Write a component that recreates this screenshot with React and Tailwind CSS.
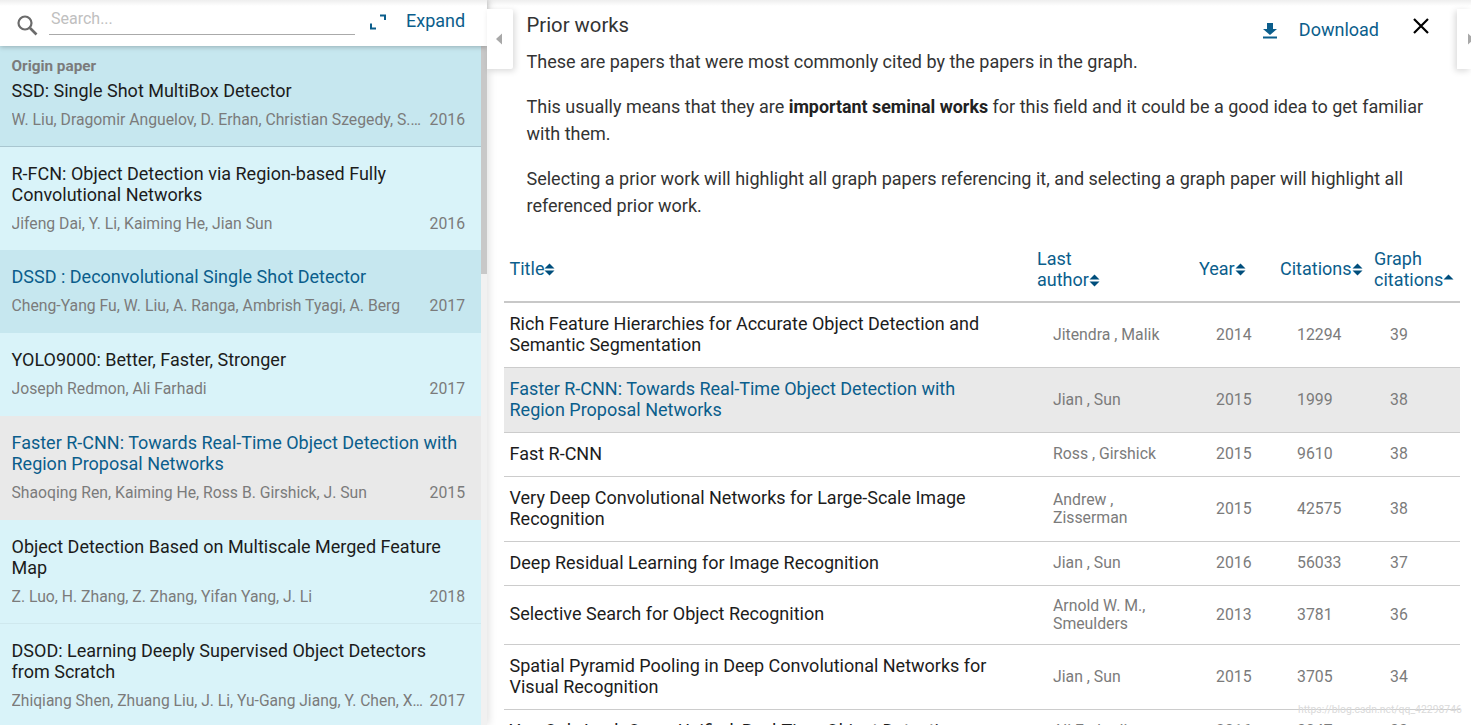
import React from "react";

const font = { fontFamily: "Roboto, sans-serif" };

const cards = [
  { h: "h-[101px]", bg: "bg-[#c6e7ef] border-b border-[#a9c6d0]", origin: true, title: ["SSD: Single Shot MultiBox Detector"], authors: "W. Liu, Dragomir Anguelov, D. Erhan, Christian Szegedy, S. Reed, Cheng-Yang Fu, A. Berg", year: "2016" },
  { h: "h-[103px]", bg: "bg-[#d9f3f9]", title: ["R-FCN: Object Detection via Region-based Fully", "Convolutional Networks"], authors: "Jifeng Dai, Y. Li, Kaiming He, Jian Sun", year: "2016" },
  { h: "h-[83px]", bg: "bg-[#c6e7ef]", link: true, title: ["DSSD : Deconvolutional Single Shot Detector"], authors: "Cheng-Yang Fu, W. Liu, A. Ranga, Ambrish Tyagi, A. Berg", year: "2017" },
  { h: "h-[83px]", bg: "bg-[#d9f3f9]", title: ["YOLO9000: Better, Faster, Stronger"], authors: "Joseph Redmon, Ali Farhadi", year: "2017" },
  { h: "h-[104px]", bg: "bg-[#e9e9e9]", link: true, title: ["Faster R-CNN: Towards Real-Time Object Detection with", "Region Proposal Networks"], authors: "Shaoqing Ren, Kaiming He, Ross B. Girshick, J. Sun", year: "2015" },
  { h: "h-[104px]", bg: "bg-[#d9f3f9] border-b border-[#cfe8ee]", title: ["Object Detection Based on Multiscale Merged Feature", "Map"], authors: "Z. Luo, H. Zhang, Z. Zhang, Yifan Yang, J. Li", year: "2018" },
  { h: "h-[104px]", bg: "bg-[#d9f3f9]", title: ["DSOD: Learning Deeply Supervised Object Detectors", "from Scratch"], authors: "Zhiqiang Shen, Zhuang Liu, J. Li, Yu-Gang Jiang, Y. Chen, Xiangyang Xue", year: "2017", tight: true },
];

const rows = [
  { t: ["Rich Feature Hierarchies for Accurate Object Detection and", "Semantic Segmentation"], a: ["Jitendra , Malik"], y: "2014", c: "12294", g: "39" },
  { t: ["Faster R-CNN: Towards Real-Time Object Detection with", "Region Proposal Networks"], a: ["Jian , Sun"], y: "2015", c: "1999", g: "38", hl: true },
  { t: ["Fast R-CNN"], a: ["Ross , Girshick"], y: "2015", c: "9610", g: "38" },
  { t: ["Very Deep Convolutional Networks for Large-Scale Image", "Recognition"], a: ["Andrew ,", "Zisserman"], y: "2015", c: "42575", g: "38" },
  { t: ["Deep Residual Learning for Image Recognition"], a: ["Jian , Sun"], y: "2016", c: "56033", g: "37" },
  { t: ["Selective Search for Object Recognition"], a: ["Arnold W. M.,", "Smeulders"], y: "2013", c: "3781", g: "36", compact: true },
  { t: ["Spatial Pyramid Pooling in Deep Convolutional Networks for", "Visual Recognition"], a: ["Jian , Sun"], y: "2015", c: "3705", g: "34" },
  { t: ["You Only Look Once: Unified, Real-Time Object Detection"], a: ["Ali Farhadi"], y: "2016", c: "3047", g: "33" },
];

function Sort({ up }) {
  return (
    <svg width="11" height="13" viewBox="0 0 11 13" className="inline-block align-[-1px] shrink-0">
      <path d="M5.5 0.5 L10.5 5.5 H0.5 Z" fill="#004e7c" />
      {!up && <path d="M0.5 7.5 H10.5 L5.5 12.5 Z" fill="#004e7c" />}
    </svg>
  );
}

function Card({ c }) {
  return (
    <div className={`${c.h} ${c.bg} shrink-0 pl-[11.5px] pr-[16px] flex flex-col ${c.origin ? "pt-[11px]" : "pt-[16px]"}`}>
      {c.origin && <div className="text-[15.3px] leading-[18px] font-bold text-[#7b7b7b]">Origin paper</div>}
      <div className={`text-[18px] leading-[21px] ${c.origin ? "mt-[5px]" : ""} ${c.link ? "text-[#0b5e8c]" : "text-[#1c1c1c]"}`}>
        {c.title.map((l) => <div key={l} className="whitespace-nowrap">{l}</div>)}
      </div>
      <div className={`flex justify-between text-[15.75px] leading-[20px] text-[#7b7b7b] mt-[9px] ${c.tight ? "gap-[3px]" : "gap-2"}`}>
        <span className={`truncate ${c.tight ? "text-[15.6px]" : ""}`}>{c.authors}</span>
        <span className="shrink-0">{c.year}</span>
      </div>
    </div>
  );
}

export default function App() {
  return (
    <div style={font} className="w-[1471px] h-[725px] overflow-hidden flex bg-white relative">
      <div className="w-[487px] h-full shrink-0 flex flex-col relative shadow-[2px_0_8px_rgba(0,0,0,0.12)] z-10">
        <div className="h-[46px] shrink-0 bg-gradient-to-b from-[#eeeeee] to-white to-[6px] flex items-start shadow-[0_1px_5px_rgba(0,0,0,0.25)] z-10 relative">
          <svg width="24" height="24" viewBox="0 0 24 24" className="ml-[15px] mt-[13px] shrink-0" fill="none">
            <circle cx="10" cy="10" r="6.5" stroke="#6b6b6b" strokeWidth="2.2" />
            <path d="M15 15 L21.5 21.5" stroke="#6b6b6b" strokeWidth="2.6" />
          </svg>
          <div className="ml-[10px] w-[306px] h-[35px] border-b border-[#aaaaaa] pl-[2px] pt-[9px] text-[16px] leading-[20px] text-[#c0c0c0]">Search...</div>
          <svg width="16" height="16" viewBox="0 0 16 16" className="ml-[15px] mt-[14px] shrink-0" fill="none" stroke="#0b5e8c" strokeWidth="2">
            <path d="M10 1.5 H15 V6" />
            <path d="M1 9.5 V14.5 H6" />
          </svg>
          <div className="ml-[20px] mt-[10px] text-[18px] leading-[22px] text-[#0b5e8c]">Expand</div>
        </div>
        <div className="flex-1 flex overflow-hidden">
          <div className="w-[481px] flex flex-col">
            {cards.map((c) => <Card key={c.title[0]} c={c} />)}
          </div>
          <div className="w-[6px] bg-[#f1f1f1]">
            <div className="w-[6px] h-[228px] bg-[#c8c8c8]" />
          </div>
        </div>
      </div>

      <div className="absolute left-[487px] top-[9px] w-[26px] h-[60px] bg-white rounded-r-[2px] shadow-[2px_2px_6px_rgba(0,0,0,0.15)] flex items-center pl-[8px] z-20">
        <svg width="8" height="12" viewBox="0 0 8 12" className="shrink-0"><path d="M7 0.5 V11.5 L1 6 Z" fill="#a8a8a8" /></svg>
      </div>
      <div className="absolute left-[1457px] top-[9px] w-[14px] h-[60px] bg-white shadow-[-2px_2px_6px_rgba(0,0,0,0.15)] flex items-center pl-[11px] z-20">
        <svg width="6" height="12" viewBox="0 0 6 12" className="shrink-0"><path d="M0 0.5 V11.5 L6 6 Z" fill="#a8a8a8" /></svg>
      </div>

      <div className="flex-1 min-w-0 relative flex flex-col">
        <div className="absolute top-0 left-0 right-0 h-[6px] bg-gradient-to-b from-[#eeeeee] to-white" />
        <div className="pl-[39.5px] pr-[36px] relative">
          <div className="flex items-start h-[50px]">
            <div className="text-[20.3px] leading-[24px] text-[#333333] mt-[13px]">Prior works</div>
            <div className="ml-auto mr-[5px] flex items-start">
              <svg width="16" height="18" viewBox="0 0 16 18" className="mt-[21px] shrink-0">
                <path d="M5 2 H11 V8 H15 L8 14 L1 8 H5 Z" fill="#0b5e8c" />
                <rect x="1" y="15.5" width="14" height="2" fill="#0b5e8c" />
              </svg>
              <div className="ml-[21px] mt-[19px] text-[18px] leading-[22px] text-[#0b5e8c]">Download</div>
              <svg width="18" height="18" viewBox="0 0 18 18" className="ml-[33px] mt-[17px] shrink-0" stroke="#000000" strokeWidth="2.2">
                <path d="M2 2 L16 16 M16 2 L2 16" />
              </svg>
            </div>
          </div>
          <div className="text-[18px] leading-[27px] text-[#333333]">
            <p className="mb-[18px] -mt-[2px] whitespace-nowrap">These are papers that were most commonly cited by the papers in the graph.</p>
            <p className="mb-[18px]">This usually means that they are <b className="font-bold text-[17.85px] text-[#222222]">important seminal works</b> for this field and it could be a good idea to get familiar with them.</p>
            <p>Selecting a prior work will highlight all graph papers referencing it, and selecting a graph paper will highlight all referenced prior work.</p>
          </div>
        </div>

        <div className="ml-[17px] w-[956px] mt-[17px] flex shrink-0 h-[67px] border-b-2 border-[#c8c8c8] text-[18px] leading-[21px] text-[#0b5e8c]">
          <div className="w-[527px] px-[5.5px] flex items-center"><span className="whitespace-nowrap">Title<Sort /></span></div>
          <div className="w-[162px] px-[6px] flex items-center"><span className="whitespace-nowrap">Last<br />author<Sort /></span></div>
          <div className="w-[81px] px-[6px] flex items-center"><span className="whitespace-nowrap">Year<Sort /></span></div>
          <div className="w-[94px] px-[6px] flex items-center"><span className="whitespace-nowrap">Citations<Sort /></span></div>
          <div className="w-[92px] px-[6px] flex items-center"><span className="whitespace-nowrap">Graph<br />citations<Sort up /></span></div>
        </div>

        {rows.map((r) => (
          <div key={r.t[0]} className={`ml-[17px] w-[956px] flex shrink-0 border-b border-[#cccccc] ${r.hl ? "bg-[#e9e9e9]" : ""}`}>
            <div className={`w-[527px] pl-[5.5px] ${r.compact ? "pt-[9px] pb-[13px]" : "pt-[10px] pb-[12px]"} text-[18px] leading-[21px] flex flex-col justify-center ${r.hl ? "text-[#0b5e8c]" : "text-[#1c1c1c]"}`}>
              {r.t.map((l) => <div key={l} className="whitespace-nowrap">{l}</div>)}
            </div>
            <div className={`w-[162px] pl-[22px] pt-[11px] ${r.compact ? "pb-[11px]" : "pb-[12px]"} text-[15.8px] leading-[18px] text-[#7b7b7b] flex flex-col justify-center`}>
              {r.a.map((l) => <div key={l}>{l}</div>)}
            </div>
            <div className="w-[81px] pl-[23px] pb-[1px] text-[15.8px] text-[#7b7b7b] flex items-center">{r.y}</div>
            <div className="w-[94px] pl-[23px] pb-[1px] text-[15.8px] text-[#7b7b7b] flex items-center">{r.c}</div>
            <div className="w-[92px] pl-[22px] pb-[1px] text-[15.8px] text-[#7b7b7b] flex items-center">{r.g}</div>
          </div>
        ))}
      </div>

      <div className="absolute left-[1298px] top-[704px] text-[10.4px] leading-[12px] text-[#dadada] z-30">https://blog.csdn.net/qq_42298746</div>
    </div>
  );
}
